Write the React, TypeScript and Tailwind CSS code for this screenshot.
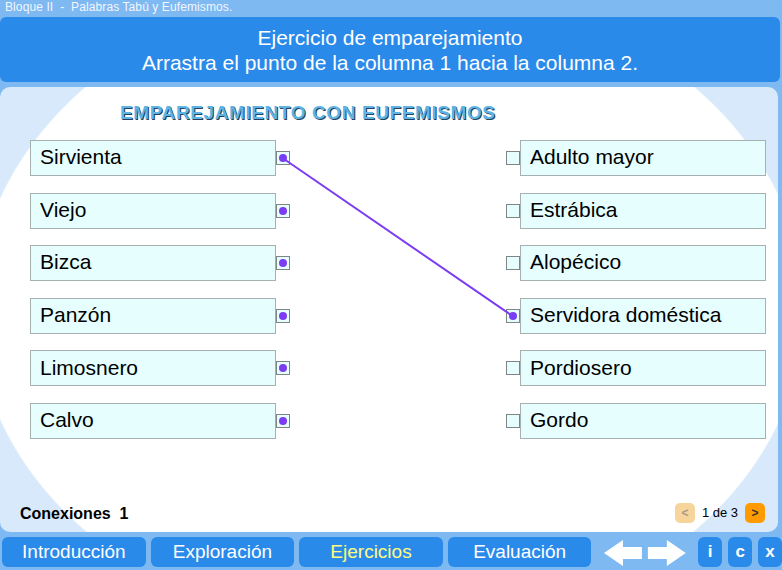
import React from "react";

const left = ["Sirvienta", "Viejo", "Bizca", "Panzón", "Limosnero", "Calvo"];
const right = ["Adulto mayor", "Estrábica", "Alopécico", "Servidora doméstica", "Pordiosero", "Gordo"];
const tabs = ["Introducción", "Exploración", "Ejercicios", "Evaluación"];

const Dot = () => <span className="block w-[8px] h-[8px] rounded-full bg-[#7b3cf2]" />;

export default function App() {
  return (
    <div className="w-[782px] h-[570px] bg-[#7fb9f2] flex flex-col font-['Liberation_Sans',Arial,sans-serif] overflow-hidden">
      {/* top line */}
      <div className="h-[17px] pl-[5px] text-[12px] leading-[15px] text-[#f2f6ff] whitespace-pre tracking-[0.1px]">
        Bloque II  -  Palabras Tabú y Eufemismos.
      </div>

      {/* header */}
      <div className="w-[780px] h-[65px] rounded-[6px] bg-[#2a8aea] flex flex-col items-center justify-center text-white text-[21px] leading-[25px]">
        <div>Ejercicio de emparejamiento</div>
        <div>Arrastra el punto de la columna 1 hacia la columna 2.</div>
      </div>

      {/* main panel */}
      <div className="relative mt-[5px] w-[778px] h-[445px] rounded-[10px] overflow-hidden bg-[radial-gradient(ellipse_415px_328px_at_390px_222px,#ffffff_99.6%,#d7e9fb_100%)] flex flex-col">
        <div className="pl-[120px] pt-[15px] text-[19px] leading-[22px] font-bold text-[#5db3e4] [text-shadow:1px_1px_0_#24405c] tracking-[0.6px] whitespace-pre">
          EMPAREJAMIENTO CON EUFEMISMOS
        </div>

        <div className="mt-[16px] flex flex-col gap-[16.6px]">
          {left.map((l, i) => (
            <div key={l} className="flex items-center h-[36px]">
              <div className="ml-[30px] w-[246px] h-[36px] border border-[#a7b0b0] bg-[#e6fefe] pl-[9px] pb-[2px] flex items-center text-[21px] text-black">
                {l}
              </div>
              <div className="w-[14px] h-[14px] border border-[#7f8585] bg-[#e6fefe] flex items-center justify-center">
                <Dot />
              </div>
              <div className="w-[216px]" />
              <div className="w-[14px] h-[14px] border border-[#7f8585] bg-[#e6fefe] flex items-center justify-center">
                {i === 3 && <Dot />}
              </div>
              <div className="w-[246px] h-[36px] border border-[#a7b0b0] bg-[#e6fefe] pl-[9px] pb-[2px] flex items-center text-[21px] text-black">
                {right[i]}
              </div>
            </div>
          ))}
        </div>

        <div className="mt-auto mb-[6px] flex items-center">
          <div className="ml-[20px] text-[16px] font-bold text-black whitespace-pre">Conexiones  1</div>
          <div className="ml-auto mr-[13px] mb-[3px] flex items-center">
            <div className="w-[20px] h-[20px] rounded-[5px] bg-[#f7d49b] text-[#a8988a] text-[12px] font-bold flex items-center justify-center">&lt;</div>
            <div className="w-[50px] text-center text-[13px] text-black">1 de 3</div>
            <div className="w-[20px] h-[20px] rounded-[5px] bg-[#ff9b00] text-[#333] text-[12px] font-bold flex items-center justify-center">&gt;</div>
          </div>
        </div>

        {/* connection line */}
        <svg className="absolute inset-0 pointer-events-none" width="778" height="445">
          <line x1="282.5" y1="71" x2="512.5" y2="229" stroke="#7b3cf2" strokeWidth="2" />
        </svg>
      </div>

      {/* bottom bar */}
      <div className="mt-[5px] h-[30px] flex items-center pl-[2px]">
        {tabs.map((t) => (
          <div
            key={t}
            className={
              "w-[144px] h-[30px] mr-[5px] rounded-[6px] bg-[#2a8aea] flex items-center justify-center text-[19px] " +
              (t === "Ejercicios" ? "text-[#fdfd7e]" : "text-white")
            }
          >
            {t}
          </div>
        ))}
        <svg width="88" height="30" className="ml-[8px]" viewBox="0 0 88 30">
          <polygon points="0,16 19,3 19,10 38,10 38,22 19,22 19,29" fill="#ffffff" />
          <polygon points="82,16 63,3 63,10 44,10 44,22 63,22 63,29" fill="#ffffff" />
        </svg>
        {["i", "c", "x"].map((b) => (
          <div key={b} className="ml-[6px] w-[24px] h-[30px] rounded-[6px] bg-[#2a8aea] flex items-center justify-center text-white font-bold text-[17px]">
            {b}
          </div>
        ))}
      </div>
    </div>
  );
}
